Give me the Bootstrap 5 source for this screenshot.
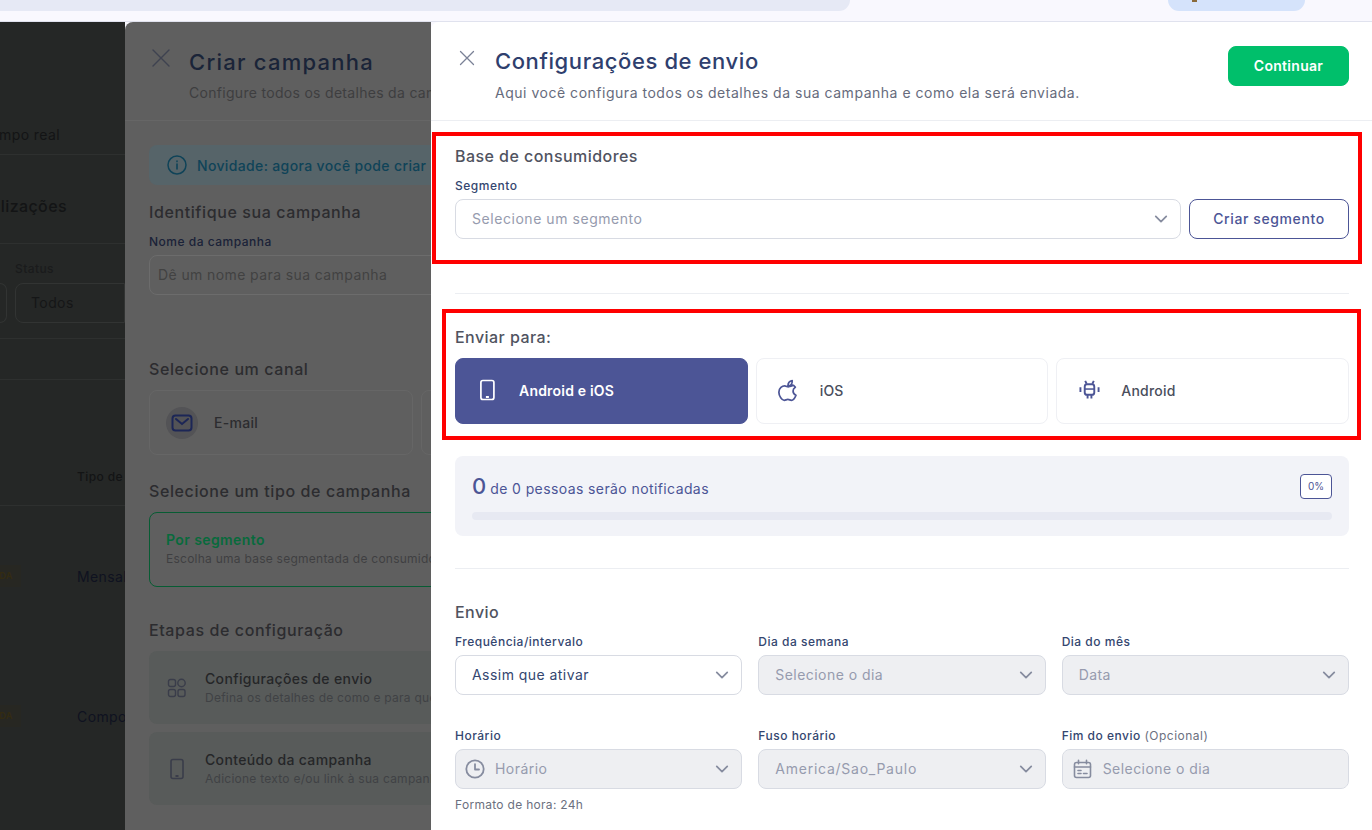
<!DOCTYPE html>
<html lang="pt-BR">
<head>
    <meta charset="UTF-8">
    <title>Configurações de envio</title>
    <link href="https://cdn.jsdelivr.net/npm/bootstrap@5.3.0/dist/css/bootstrap.min.css" rel="stylesheet">
    <style>
        body {
            height: 100vh;
            overflow: hidden;
            background: #f9f8fe;
            font-family: "Inter", "Liberation Sans", sans-serif;
            font-size: 14px;
        }

        /* browser-ish strip on top */
        .top-strip { height: 22px; background: #f9f8fe; border-bottom: 1px solid #e0e2ee; }
        .top-search { width: 850px; height: 11px; background: #e6e9f5; border-bottom-right-radius: 14px; }
        .top-user { width: 137px; height: 11px; margin-left: 318px; background: #d5e3fb; border-radius: 0 0 18px 18px; padding-left: 24px; }
        .top-user i { display: block; width: 5px; height: 2px; background: #8a6a3a; }

        .stage { height: 808px; }

        /* page behind, already darkened */
        .back-page { width: 125px; background: #252726; color: #131415; overflow: hidden; white-space: nowrap; letter-spacing: .4px; }
        .back-row { border-bottom: 1px solid #2e302f; }
        .back-cut { display: flex; justify-content: flex-end; }
        .back-title { font-size: 16px; font-weight: 500; }
        .back-select { width: 110px; height: 40px; border: 1px solid #323433; border-radius: 8px 0 0 8px; color: #151617; padding: 8px 15px; }
        .back-stub { width: 7px; height: 40px; border: 1px solid #323433; border-left: 0; border-radius: 0 8px 8px 0; }
        .back-tag { width: 21px; height: 22px; background: #272722; color: #332b12; font-size: 9px; font-weight: 700; line-height: 22px; padding-right: 8px; display: flex; justify-content: flex-end; }

        /* first drawer, dimmed by the second */
        .drawer-back { width: 306px; background: #5f5f5f; border-top-left-radius: 8px; overflow: hidden; white-space: nowrap; color: #2c2c2f; }
        .drawer-back-head { height: 99px; border-bottom: 1px solid #666; padding: 26px 0 0 24px; }
        .drawer-back-body { width: 720px; padding: 24px 0 0 24px; }
        .dim-title { font-size: 22px; font-weight: 500; line-height: 28px; color: #1a2438; letter-spacing: 1.25px; }
        .dim-sub { font-size: 14px; line-height: 20px; color: #3e3e40; letter-spacing: .3px; }
        .dim-note { height: 40px; width: 400px; background: #566469; border-radius: 8px; color: #0f4358; font-weight: 500; padding-left: 18px; gap: 10px; letter-spacing: .35px; }
        .dim-h { font-size: 16px; font-weight: 500; line-height: 24px; color: #2c2c2f; letter-spacing: .6px; }
        .dim-label { font-size: 12px; font-weight: 500; line-height: 18px; color: #1a2238; padding-top: 1px; letter-spacing: .5px; }
        .dim-input { width: 400px; height: 40px; border: 1px solid #6c6c6c; border-radius: 8px; color: #424242; padding: 8px; letter-spacing: .4px; }
        .dim-channel { width: 264px; height: 65px; border: 1px solid #666; border-radius: 8px; padding-left: 16px; color: #2c2c2f; font-weight: 500; letter-spacing: .3px; }
        .dim-round { width: 32px; height: 32px; border-radius: 50%; background: #535356; color: #1c2656; }
        .dim-green { width: 500px; height: 75px; border: 1px solid #075c33; border-radius: 8px; padding: 0 0 2px 16px; }
        .dim-green b { color: #086a3c; font-weight: 600; line-height: 20px; letter-spacing: .4px; }
        .dim-green span { font-size: 12px; line-height: 18px; color: #3f3f42; letter-spacing: .25px; }
        .dim-step { width: 500px; height: 73px; background: #585b5a; border-radius: 8px; color: #3a3d4a; padding-left: 18px; gap: 18px; }
        .dim-step b { font-weight: 500; line-height: 20px; color: #252628; display: block; letter-spacing: .35px; }
        .dim-step span { font-size: 12px; line-height: 18px; color: #404245; display: block; letter-spacing: .25px; }

        /* main drawer */
        .drawer-main { width: 941px; background: #fff; border-top-left-radius: 8px; }
        .main-head { height: 99px; border-bottom: 1px solid #eceef2; padding: 24px 23px 0 28px; }
        .main-title { font-size: 22px; font-weight: 500; line-height: 30px; color: #2f3f6e; letter-spacing: .6px; }
        .main-sub { font-size: 14px; line-height: 20px; color: #666b7c; margin-top: 7px; letter-spacing: .52px; }
        .close-x { color: #7a8196; margin-top: 4px; margin-right: 20px; }
        .btn-go { width: 121px; height: 40px; background: #00bf6b; border-color: #00bf6b; color: #fff; border-radius: 8px; font-size: 14px; font-weight: 600; padding: 5px 0 7px; letter-spacing: .3px; }

        .red-one { border: 4px solid #f00; margin: 11px 10px 0 1px; padding: 8px 9px 21px 19px; }
        .red-two { border: 4px solid #f00; margin: 15px 11px 0 11px; padding: 12px 8px 12px 9px; }
        .plain-part { padding: 0 23px 0 24px; }
        .line { height: 1px; background: #eceef2; }

        .part-title { font-size: 16px; font-weight: 500; line-height: 24px; color: #50535f; letter-spacing: .45px; }
        .form-label { font-size: 12px; font-weight: 500; line-height: 18px; color: #34466f; padding-top: 1px; margin-bottom: 4px; display: block; letter-spacing: .5px; }
        .form-label span { color: #6b7080; font-weight: 400; }
        .form-select, .form-control {
            height: 40px;
            font-size: 14px;
            line-height: 20px;
            border-radius: 8px;
            border-color: #d8dbe3;
            color: #34466f;
            padding: 9px 36px 9px 16px;
            letter-spacing: .45px;
        }
        .form-select {
            --bs-form-select-bg-img: url("data:image/svg+xml,%3csvg xmlns='http://www.w3.org/2000/svg' viewBox='0 0 16 16'%3e%3cpath fill='none' stroke='%23868c9f' stroke-linecap='round' stroke-linejoin='round' stroke-width='2' d='M2 5l6 6 6-6'/%3e%3c/svg%3e");
            background-position: right 12px center;
            background-size: 14px 14px;
        }
        .form-select.is-empty { color: #969bae; letter-spacing: .55px; }
        .form-select.wide-text { letter-spacing: .75px; }
        .form-select:disabled, .form-control:disabled { background-color: #eeeff2; color: #969bae; opacity: 1; }
        .form-control::placeholder { color: #969bae; opacity: 1; }
        .with-icon .form-select { padding-left: 39px; }
        .with-icon .form-control { padding: 8px 36px 10px 40px; }
        .field-icon { position: absolute; left: 10px; top: 10px; color: #868c9f; }
        .hint-text { font-size: 12px; line-height: 18px; color: #6b7080; margin-top: 7px; letter-spacing: .3px; }

        .btn-make { width: 160px; height: 40px; flex: none; border: 1px solid #4c5596; border-radius: 8px; color: #4c5596; font-size: 14px; font-weight: 500; background: #fff; padding: 5px 0 7px; letter-spacing: .6px; }

        .send-opt { flex: 1 1 0; height: 66px; border: 1px solid #eff0f4; border-radius: 8px; padding: 0 0 2px 22px; gap: 21px; background: #fff; color: #4a4e5c; font-size: 14px; font-weight: 500; letter-spacing: .2px; }
        .send-opt svg { color: #4c5596; }
        .send-opt.is-on { background: #4c5596; border-color: #4c5596; color: #fff; font-weight: 600; }
        .send-opt.is-on svg { color: #fff; }
        .apple-shift { margin: 0 -1px 0 -5px; }

        .reach-box { height: 80px; background: #f2f3f8; border-radius: 8px; padding: 17px; margin-top: 16px; }
        .reach-num { font-size: 22px; font-weight: 500; line-height: 26px; color: #4c5596; }
        .reach-text { font-size: 14px; color: #4c5596; margin: 4px 0 0 4px; letter-spacing: .4px; }
        .reach-pct { width: 32px; height: 25px; border: 1px solid #4c5596; border-radius: 4px; font-size: 10px; color: #4c5596; background: #fff; }
        .progress { height: 8px; background: #e7e9f2; border-radius: 4px; margin-top: 13px; }
        .progress-bar { background: #4c5596; }
    </style>
</head>
<body class="m-0">

<div class="top-strip d-flex">
    <div class="top-search"></div>
    <div class="top-user"><i></i></div>
</div>

<div class="stage d-flex">

    <!-- page behind -->
    <div class="back-page">
        <div class="back-row back-cut" style="height:133px;padding:102px 65px 0 0;">Tempo real</div>
        <div class="back-row back-cut back-title" style="height:89px;padding:39px 58px 0 0;">Atualizações</div>
        <div class="back-row" style="height:95px;padding-top:16px;">
            <div style="font-size:12px;font-weight:500;line-height:18px;margin-left:15px;color:#1a1b1c;">Status</div>
            <div class="d-flex" style="margin-top:5px;">
                <div class="back-stub"></div>
                <div class="back-select" style="margin-left:8px;">Todos</div>
            </div>
        </div>
        <div class="back-row" style="height:41px;"></div>
        <div class="back-row" style="height:126px;padding:88px 0 0 77px;font-size:12px;font-weight:500;">Tipo de</div>
        <div class="d-flex align-items-center" style="height:140px;">
            <div class="back-tag">PAUSADA</div><div style="margin-left:56px;color:#0f1220;">Mensal</div>
        </div>
        <div class="d-flex align-items-center" style="height:140px;">
            <div class="back-tag">PAUSADA</div><div style="margin-left:56px;color:#0f1220;">Compo</div>
        </div>
    </div>

    <!-- first drawer -->
    <div class="drawer-back">
        <div class="drawer-back-head d-flex">
            <svg width="24" height="24" viewBox="0 0 24 24" style="margin-top:-2px;margin-right:16px;flex:none;color:#3e4250;"><path d="M4 4l16 16M20 4L4 20" stroke="currentColor" stroke-width="1.4" stroke-linecap="round"/></svg>
            <div>
                <div class="dim-title">Criar campanha</div>
                <div class="dim-sub" style="margin-top:7px;">Configure todos os detalhes da campanha</div>
            </div>
        </div>
        <div class="drawer-back-body">
            <div class="dim-note d-flex align-items-center">
                <svg width="20" height="20" viewBox="0 0 20 20"><circle cx="10" cy="10" r="9" fill="none" stroke="currentColor" stroke-width="1.5"/><path d="M10 9v5M10 6v.6" stroke="currentColor" stroke-width="1.6" stroke-linecap="round"/></svg>
                Novidade: agora você pode criar campanhas
            </div>
            <div class="dim-h" style="margin-top:15px;">Identifique sua campanha</div>
            <div class="dim-label" style="margin-top:8px;">Nome da campanha</div>
            <div class="dim-input" style="margin-top:4px;">Dê um nome para sua campanha</div>
            <div class="dim-h" style="margin-top:62px;">Selecione um canal</div>
            <div class="d-flex gap-2" style="margin-top:9px;">
                <div class="dim-channel d-flex align-items-center gap-3">
                    <div class="dim-round d-flex align-items-center justify-content-center">
                        <svg width="22" height="18" viewBox="0 0 22 18"><rect x="1.5" y="1.5" width="19" height="15" rx="3" fill="none" stroke="currentColor" stroke-width="2"/><path d="M5 5l6 5 6-5" fill="none" stroke="currentColor" stroke-width="2" stroke-linecap="round"/></svg>
                    </div>
                    E-mail
                </div>
                <div class="dim-channel"></div>
            </div>
            <div class="dim-h" style="margin-top:24px;">Selecione um tipo de campanha</div>
            <div class="dim-green d-flex flex-column justify-content-center" style="margin-top:9px;">
                <b>Por segmento</b>
                <span>Escolha uma base segmentada de consumidores</span>
            </div>
            <div class="dim-h" style="margin-top:31px;">Etapas de configuração</div>
            <div class="dim-step d-flex align-items-center" style="margin-top:9px;">
                <svg width="20" height="20" viewBox="0 0 20 20" fill="none" stroke="currentColor" stroke-width="1.4"><rect x="1.5" y="1.5" width="7" height="7" rx="2"/><circle cx="14.5" cy="5" r="3.7"/><rect x="1.5" y="11.5" width="7" height="7" rx="2"/><rect x="11" y="11.5" width="7" height="7" rx="2"/></svg>
                <div><b>Configurações de envio</b><span>Defina os detalhes de como e para quem enviar</span></div>
            </div>
            <div class="dim-step d-flex align-items-center" style="margin-top:8px;">
                <svg width="20" height="22" viewBox="0 0 20 22"><rect x="4" y="1.5" width="12" height="19" rx="2" fill="none" stroke="currentColor" stroke-width="1.6"/><rect x="8.5" y="17" width="3" height="2" fill="currentColor"/></svg>
                <div><b>Conteúdo da campanha</b><span>Adicione texto e/ou link à sua campanha</span></div>
            </div>
        </div>
    </div>

    <!-- main drawer -->
    <div class="drawer-main">
        <div class="main-head d-flex align-items-start">
            <svg class="close-x" width="16" height="16" viewBox="0 0 16 16" style="flex:none;"><path d="M1.5 1.5l13 13M14.5 1.5l-13 13" stroke="currentColor" stroke-width="1.3" stroke-linecap="round"/></svg>
            <div class="flex-grow-1">
                <div class="main-title">Configurações de envio</div>
                <div class="main-sub">Aqui você configura todos os detalhes da sua campanha e como ela será enviada.</div>
            </div>
            <button type="button" class="btn btn-go">Continuar</button>
        </div>

        <div class="red-one">
            <div class="part-title">Base de consumidores</div>
            <label class="form-label mt-2">Segmento</label>
            <div class="d-flex gap-2">
                <select class="form-select is-empty"><option>Selecione um segmento</option></select>
                <button type="button" class="btn btn-make">Criar segmento</button>
            </div>
        </div>

        <div class="plain-part" style="margin-top:29px;"><div class="line"></div></div>

        <div class="red-two">
            <div class="part-title">Enviar para:</div>
            <div class="d-flex gap-2" style="margin-top:9px;">
                <button type="button" class="btn send-opt is-on d-flex align-items-center">
                    <svg width="20" height="22" viewBox="0 0 20 22"><rect x="2.9" y="1.5" width="13" height="19" rx="2" fill="none" stroke="currentColor" stroke-width="1.7"/><rect x="7.9" y="17" width="3" height="2" fill="currentColor"/></svg>
                    Android e iOS
                </button>
                <button type="button" class="btn send-opt d-flex align-items-center">
                    <svg class="apple-shift" width="26" height="26" viewBox="0 0 24 24"><path d="M16.5 8.2c-1.4 0-2.5.9-3.4.9-.9 0-2-.9-3.3-.9C7.8 8.2 4.5 9.9 4.5 14c0 3.7 2.9 7.5 5 7.5 1.2 0 1.9-.8 3.3-.8s2 .8 3.3.8c1.9 0 3.5-2.8 4.2-4.6-1.7-.7-2.7-2.2-2.7-3.9 0-1.6.8-2.9 2.1-3.6-.8-1.3-2.3-2.2-3.2-2.2zM12.9 8.3c0-2.5 1.5-4.7 3.9-5 .2 2.6-1.4 4.8-3.9 5z" fill="none" stroke="currentColor" stroke-width="1.6" stroke-linejoin="round"/></svg>
                    iOS
                </button>
                <button type="button" class="btn send-opt d-flex align-items-center">
                    <svg width="21" height="22" viewBox="0 0 22 22" fill="none" stroke="currentColor"><rect x="6" y="5" width="10" height="11" rx="2.5" stroke-width="2"/><path d="M6 10h10" stroke-width="1.6"/><path d="M1.5 8v5M20.5 8v5M9 16v4M13 16v4M6.5 1.5l1.5 3M15.5 1.5l-1.5 3" stroke-width="2"/></svg>
                    Android
                </button>
            </div>
        </div>

        <div class="plain-part">
            <div class="reach-box">
                <div class="d-flex align-items-center justify-content-between">
                    <div class="d-flex align-items-center"><span class="reach-num">0</span><span class="reach-text">de 0 pessoas serão notificadas</span></div>
                    <div class="reach-pct d-flex align-items-center justify-content-center">0%</div>
                </div>
                <div class="progress"><div class="progress-bar" style="width:0%"></div></div>
            </div>

            <div class="line" style="margin-top:32px;"></div>

            <div class="part-title" style="margin-top:31px;">Envio</div>
            <div class="row gx-3 mt-2">
                <div class="col-4">
                    <label class="form-label">Frequência/intervalo</label>
                    <select class="form-select"><option>Assim que ativar</option></select>
                </div>
                <div class="col-4">
                    <label class="form-label">Dia da semana</label>
                    <select class="form-select" disabled><option>Selecione o dia</option></select>
                </div>
                <div class="col-4">
                    <label class="form-label">Dia do mês</label>
                    <select class="form-select" disabled><option>Data</option></select>
                </div>
            </div>
            <div class="row gx-3" style="margin-top:31px;">
                <div class="col-4">
                    <label class="form-label">Horário</label>
                    <div class="position-relative with-icon">
                        <select class="form-select" disabled><option>Horário</option></select>
                        <svg class="field-icon" width="20" height="20" viewBox="0 0 20 20" fill="none" stroke="currentColor" stroke-width="1.8" stroke-linecap="round" stroke-linejoin="round"><circle cx="10" cy="10" r="8.7"/><path d="M10 5.2V10.5H14"/></svg>
                    </div>
                    <div class="hint-text">Formato de hora: 24h</div>
                </div>
                <div class="col-4">
                    <label class="form-label">Fuso horário</label>
                    <select class="form-select wide-text" disabled><option>America/Sao_Paulo</option></select>
                </div>
                <div class="col-4">
                    <label class="form-label">Fim do envio <span>(Opcional)</span></label>
                    <div class="position-relative with-icon">
                        <input class="form-control" placeholder="Selecione o dia" disabled>
                        <svg class="field-icon" width="20" height="20" viewBox="0 0 20 20" fill="none" stroke="currentColor" stroke-width="1.6" stroke-linecap="round"><rect x="2.5" y="3.5" width="16" height="15" rx="2"/><path d="M2.5 8h16M6.5 1.2v3.6M14.5 1.2v3.6M6 11.5h3M11.5 14.5h3.5M6 14.5h3"/></svg>
                    </div>
                </div>
            </div>
        </div>
    </div>
</div>

<script src="https://cdn.jsdelivr.net/npm/bootstrap@5.3.0/dist/js/bootstrap.bundle.min.js"></script>
</body>
</html>
